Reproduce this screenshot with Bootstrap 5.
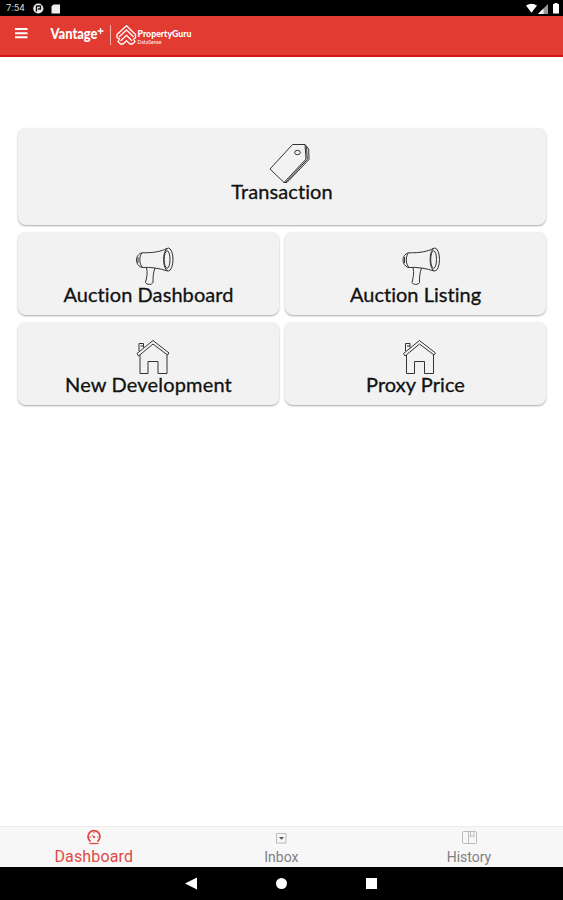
<!DOCTYPE html>
<html lang="en">
<head>
<meta charset="utf-8">
<meta name="viewport" content="width=device-width, initial-scale=1">
<title>Vantage+ Dashboard</title>
<link href="https://cdn.jsdelivr.net/npm/bootstrap@5.3.0/dist/css/bootstrap.min.css" rel="stylesheet">
<script src="https://cdn.jsdelivr.net/npm/bootstrap@5.3.0/dist/js/bootstrap.bundle.min.js" defer></script>
<style>
body{font-family:Roboto,"Liberation Sans",sans-serif;height:900px;overflow:hidden}
svg{display:block;flex:none}
.status{height:16px;background:#000}
.status-time{font-size:9.5px;line-height:16px;letter-spacing:.1px;padding-left:6px;width:33px;color:#ddd}
.appbar{height:41px;background:#e23b32;border-bottom:2px solid #d3141a}
.menu-btn{margin:11px 0 0 14px}
.brand-logo{margin:4px 0 0 22px}
.tiles{padding:71px 17px 0 18px}
.tiles-grid{display:grid;grid-template-columns:261px 261px;column-gap:6px;row-gap:7px;grid-template-rows:97px 83px 83px}
.tile{background:#f2f2f2;border-radius:8px;padding-top:13px;box-shadow:0 1px 2px rgba(0,0,0,.34);color:#111;border:0}
.tile-wide{grid-column:1/3}
.tile svg{overflow:visible;stroke:#333;fill:none;stroke-width:1}
.tile-label{font-family:Lato,"Open Sans",sans-serif;font-size:20px;line-height:19px;font-weight:400;-webkit-text-stroke:.3px #111;white-space:nowrap;font-variant-ligatures:none}
.l-tr{letter-spacing:.1px;line-height:20px}.l-ad{letter-spacing:.08px}.l-al{letter-spacing:.02px}.l-nd{letter-spacing:.17px}.l-pp{letter-spacing:.05px}
.tabs{height:41px;background:#f7f7f7;border-top:1px solid #ececec;color:#808080;font-size:14px}
.tab-item{width:187.6px;padding-top:3px}
.tab-text{line-height:17px;margin-top:3px;letter-spacing:0}
.tab-on{color:#e04a44}
.tab-on svg{margin-top:-1px;margin-bottom:1px}
.tab-on .tab-text{font-size:16px;margin-top:2px;letter-spacing:.15px}
.sysnav{height:33px;background:#000}
</style>
</head>
<body class="d-flex flex-column bg-white">
<div class="status d-flex align-items-center">
  <span class="status-time">7:54</span>
  <svg width="28" height="16"><circle cx="5.300" cy="8.500" r="5.100" fill="#eee"/><path d="M3.500 5.500v6M4 6h3.500v3H5" fill="none" stroke="#111" stroke-width="1.400"/><path d="M20.500 4.500h6.500v9h-8.500V6.500z" fill="#eee"/></svg>
  <svg class="ms-auto" width="38" height="16"><path d="M1 5.500q5.500-3.500 11 0L6.500 12.800z" fill="#fff"/><path d="M23 4v10H13z" fill="#999"/><path d="M18.500 8.500V14H13z" fill="#fff"/><path d="M28 4h1.500V3h3v1h1.500v9.500h-6z" fill="#fff"/></svg>
</div>
<header class="appbar d-flex align-items-start">
  <svg class="menu-btn" width="14" height="12" fill="#fff"><path d="M1 1h12.500v2H1zM1 5.200h12.500v2H1zM1 9.300h12.500v2H1z"/></svg>
  <svg class="brand-logo" width="150" height="30" fill="#fff">
    <text x="0.500" y="19" font-family="Lato" font-weight="900" font-size="14.500" textLength="47" lengthAdjust="spacingAndGlyphs">Vantage</text>
    <path d="M47.500 11h6M50.500 8v6" stroke="#fff" stroke-width="1.400"/>
    <path d="M60.500 5v20" stroke="#f5b0ab"/>
    <g fill="none" stroke="#fff" stroke-width="1.300" stroke-linejoin="round" stroke-linecap="round">
      <path d="M67 14.500l9.500-8.800 9 8.800v3.200l-2 1.300 1.500 2.500-2.500 2.500h-2.500l-3.500-3.300-3.500 3.300h-2.500L68 21.500l1.500-2.500-2.500-1.300z"/>
      <path d="M69.500 16.500l7-6.500 6.700 6.500M71 20.500l5.500-5.200 5.200 5.200"/>
    </g>
    <text x="87.500" y="17.300" font-family="Lato" font-weight="900" font-size="10" textLength="54" lengthAdjust="spacingAndGlyphs">PropertyGuru</text>
    <text x="87.500" y="24.300" font-family="Lato" font-size="5" textLength="24" lengthAdjust="spacingAndGlyphs">DataSense</text>
  </svg>
</header>
<main class="tiles flex-grow-1">
  <div class="tiles-grid">
    <div class="tile tile-wide d-flex flex-column align-items-center">
      <svg width="60" height="40"><path d="M18 28L40.500 3.500H53l1 14.500L32 41.500z"/><path d="M53 3.500l3.700 4.500.3 10.500L35 41.500H32M54.500 5.500l.8 13L33.500 41.500"/><ellipse cx="45.500" cy="11.500" rx="2.800" ry="2.200"/></svg>
      <div class="tile-label l-tr">Transaction</div>
    </div>
    <div class="tile d-flex flex-column align-items-center">
      <svg width="60" height="40"><use href="#horn" x="-.5"/></svg>
      <div class="tile-label l-ad">Auction Dashboard</div>
    </div>
    <div class="tile d-flex flex-column align-items-center">
      <svg width="60" height="40"><use href="#horn" x="-1"/></svg>
      <div class="tile-label l-al">Auction Listing</div>
    </div>
    <div class="tile d-flex flex-column align-items-center">
      <svg width="60" height="40"><use href="#house" x="-.5"/></svg>
      <div class="tile-label l-nd">New Development</div>
    </div>
    <div class="tile d-flex flex-column align-items-center">
      <svg width="60" height="40"><use href="#house" x="-1"/></svg>
      <div class="tile-label l-pp">Proxy Price</div>
    </div>
  </div>
</main>
<nav class="tabs d-flex">
  <div class="tab-item tab-on d-flex flex-column align-items-center">
    <svg width="16" height="16" fill="none" stroke="#e04a44"><path d="M4.500 12.500A6 6 0 1 1 11.500 12.500" stroke-width="1.800"/><path d="M3.500 14.500h9" stroke-width="1.300"/><path d="M8 3v1.500M3.500 8H5M11 8h1.500M6 6l2 2" /><circle cx="8" cy="8" r=".8" fill="#e04a44"/></svg>
    <div class="tab-text">Dashboard</div>
  </div>
  <div class="tab-item d-flex flex-column align-items-center">
    <svg width="16" height="16" fill="none" stroke="#bbb"><path d="M3.500 3.500h9.500v9.500H3.500z"/><path d="M6 7h5L8.500 9.800z" fill="#555" stroke="none"/></svg>
    <div class="tab-text">Inbox</div>
  </div>
  <div class="tab-item d-flex flex-column align-items-center">
    <svg width="16" height="16" fill="none" stroke="#bbb"><rect x="1.500" y="1.500" width="14" height="12" rx="1.200"/><path d="M7.500 2v12M9.500 2v5l1.700-1.400L13 7V2"/></svg>
    <div class="tab-text">History</div>
  </div>
</nav>
<div class="sysnav"><svg width="563" height="33" fill="#fff"><path d="M185 16.500L197 10.500v12z"/><circle cx="281.500" cy="16.500" r="5.500"/><path d="M366 11h11v11h-11z"/></svg></div>
<svg width="0" height="0" class="d-none">
  <g id="horn"><ellipse cx="49.800" cy="14.500" rx="4.700" ry="11.500"/><ellipse cx="48.600" cy="14.500" rx="2.900" ry="8.800"/><path d="M48.500 3.300C43 6.500 35 8 23.500 7.800 19.500 9 18 12 18 15c0 3 1.500 6 5 7.500 9-.7 19 1 26 3.500M23.500 7.800C20.500 11 20.500 19 24 22.500M19.500 12v6M28 22.500C29.500 28 28 33 27 37.500c1 2.500 6.500 2.500 7.500 0C34.500 33 34.500 28 36.500 23"/></g>
  <g id="house"><path d="M18.500 18.500L34.500 5.500l16 12.500-1.500 2L34.500 9 20 21zM21.500 20v18.500h8V26.500h10v12H48.500V19.500M20.500 16V8.500h4.500V12.500M22 11h3"/></g>
</svg>
</body>
</html>
